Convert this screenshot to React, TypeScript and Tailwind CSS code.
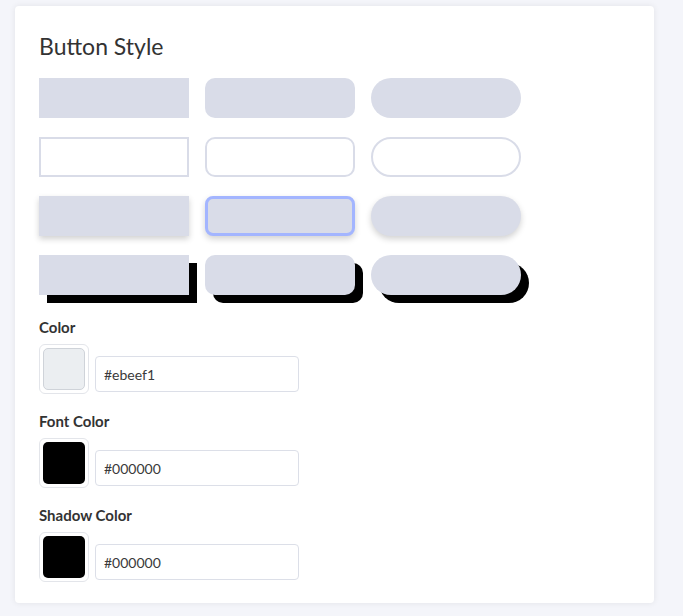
import React from 'react';

const btnBase = 'w-[150px] h-[40px] bg-[#d9dce8]';

const rows: string[][] = [
	['rounded-none', 'rounded-[10px]', 'rounded-full'],
	[
		'rounded-none bg-white border-2 border-[#d9dce8]',
		'rounded-[10px] bg-white border-2 border-[#d9dce8]',
		'rounded-full bg-white border-2 border-[#d9dce8]'
	],
	[
		'rounded-none shadow-[0_3px_6px_rgba(0,0,0,0.18)]',
		'rounded-[8px] border-[3px] border-[#a3b5ff] shadow-[0_3px_6px_rgba(0,0,0,0.18)]',
		'rounded-full shadow-[0_3px_6px_rgba(0,0,0,0.18)]'
	],
	[
		'rounded-none shadow-[8px_8px_0_#000]',
		'rounded-[10px] shadow-[8px_8px_0_#000]',
		'rounded-full shadow-[8px_8px_0_#000]'
	]
];

function ColorField({
	label,
	value,
	first
}: {
	label: string;
	value: string;
	first?: boolean;
}) {
	return (
		<div className={first ? 'mt-[22px]' : 'mt-[17px]'}>
			<div className="text-[15px] leading-[20px] font-bold text-[#333]">{label}</div>
			<div className="flex items-end gap-[6px] mt-[7px]">
				<div className="w-[50px] h-[50px] rounded-[6px] border border-[#e3e5ea] bg-white p-[3px]">
					<div
						className={`w-full h-full rounded-[5px] ${
							first ? 'bg-[#ebeef1] border border-[#cfd3d9]' : 'bg-black'
						}`}
					/>
				</div>
				<div className="mb-[2px] w-[204px] h-[36px] rounded-[4px] border border-[#dcdfe8] flex items-center px-[8px] text-[14px] text-[#3a3a3a]">
					{value}
				</div>
			</div>
		</div>
	);
}

export default function App() {
	return (
		<div
			className="min-h-screen bg-[#f4f5fa] pt-[6px] pl-[15px]"
			style={{ fontFamily: 'Lato, "Noto Sans", sans-serif' }}
		>
			<div className="w-[639px] h-[597px] bg-white rounded-[4px] shadow-[0_0_6px_rgba(0,0,0,0.08)] pl-6 pt-[25px]">
				<h2 className="text-[23px] leading-[30px] text-[#333]">Button Style</h2>
				<div className="flex flex-col gap-[19px] mt-[17px]">
					{rows.map((row, i) => (
						<div key={i} className="flex gap-4">
							{row.map((cls, j) => (
								<div key={j} className={`${btnBase} ${cls}`} />
							))}
						</div>
					))}
				</div>
				<ColorField label="Color" value="#ebeef1" first />
				<ColorField label="Font Color" value="#000000" />
				<ColorField label="Shadow Color" value="#000000" />
			</div>
		</div>
	);
}
